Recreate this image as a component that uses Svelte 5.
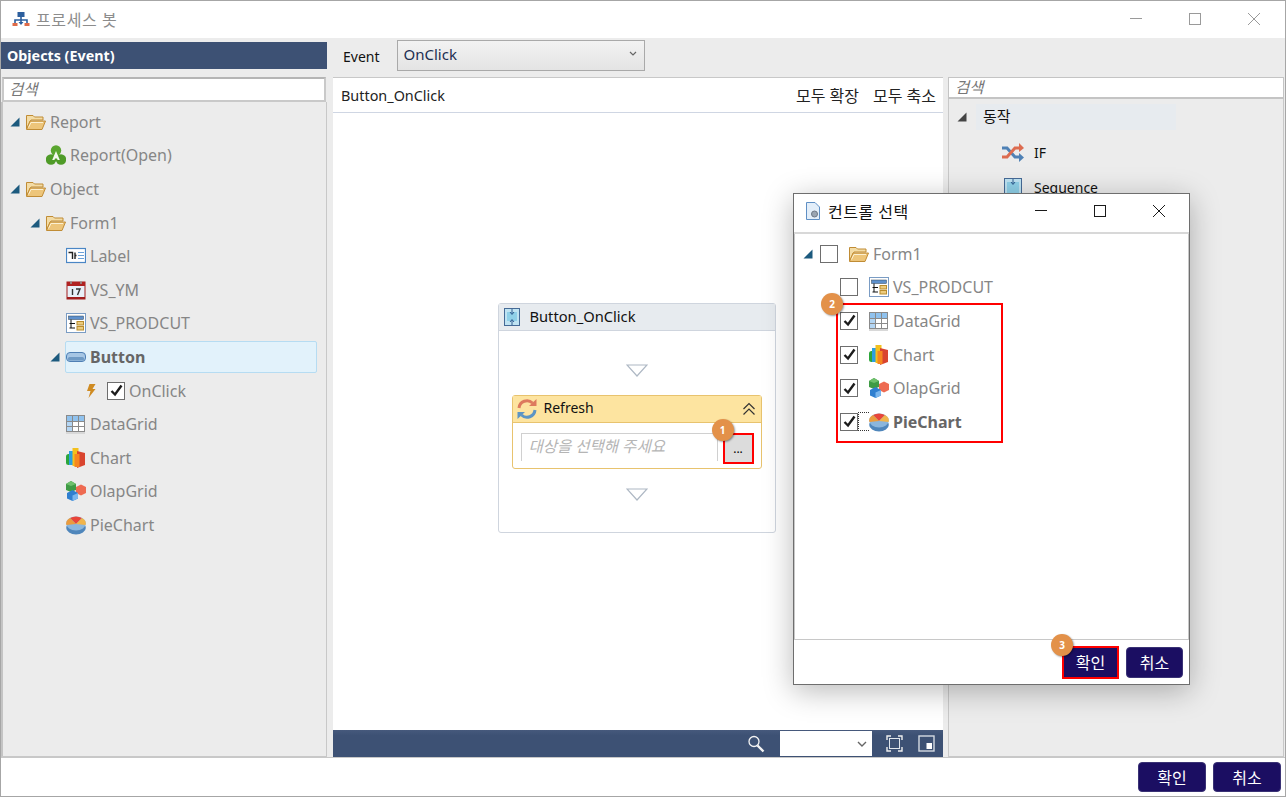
<script>
  const tree = [
    { label: 'Report', icon: 'folder', depth: 0, arrow: true },
    { label: 'Report(Open)', icon: 'recycle', depth: 1 },
    { label: 'Object', icon: 'folder', depth: 0, arrow: true },
    { label: 'Form1', icon: 'folder', depth: 1, arrow: true },
    { label: 'Label', icon: 'label', depth: 2 },
    { label: 'VS_YM', icon: 'calendar', depth: 2 },
    { label: 'VS_PRODCUT', icon: 'combo', depth: 2 },
    { label: 'Button', icon: 'button', depth: 2, arrow: true, selected: true },
    { label: 'OnClick', icon: 'bolt', depth: 3, check: true },
    { label: 'DataGrid', icon: 'grid', depth: 2 },
    { label: 'Chart', icon: 'chart', depth: 2 },
    { label: 'OlapGrid', icon: 'olap', depth: 2 },
    { label: 'PieChart', icon: 'pie', depth: 2 }
  ];

  const picks = [
    { label: 'VS_PRODCUT', icon: 'combo', checked: false },
    { label: 'DataGrid', icon: 'grid', checked: true },
    { label: 'Chart', icon: 'chart', checked: true },
    { label: 'OlapGrid', icon: 'olap', checked: true },
    { label: 'PieChart', icon: 'pie', checked: true, bold: true }
  ];
</script>

{#snippet arrow(dark = false)}
  <svg class="arrow" width="10" height="10" viewBox="0 0 10 10"><path d="M9.5 0.5V9.5H0.5Z" fill={dark ? '#444' : '#1c5a7e'} /></svg>
{/snippet}

{#snippet winButtons(color)}
  <div class="win-buttons">
    <svg width="14" height="14" viewBox="0 0 14 14"><path d="M1 6.5H13" stroke={color} fill="none" /></svg>
    <svg width="14" height="14" viewBox="0 0 14 14"><rect x="1.5" y="1.5" width="11" height="11" stroke={color} fill="none" /></svg>
    <svg width="14" height="14" viewBox="0 0 14 14"><path d="M1 1L13 13M13 1L1 13" stroke={color} fill="none" /></svg>
  </div>
{/snippet}

{#snippet icon(name)}
  <svg class="icon" width="20" height="20" viewBox="0 0 20 20">
    {#if name === 'folder'}
      <path d="M0.5 17V3.5H7L8.5 5H17V8H5L0.5 17Z" fill="#f3dca6" stroke="#c08c35" />
      <path d="M0.5 17.5L4 9H19.5L16 17.5Z" fill="#edc57a" stroke="#c08c35" />
      <path d="M2.5 15.5L5 10.5H17" stroke="#fbf0d2" fill="none" />
    {:else if name === 'recycle'}
      <circle cx="10" cy="5.5" r="5.2" fill="#5aa62f" />
      <circle cx="5" cy="14.5" r="5.2" fill="#4f9b28" />
      <circle cx="15" cy="14.5" r="5.2" fill="#4f9b28" />
      <path d="M10 6L13.8 15H11.6L11 13.5H9L8.4 15H6.2Z" fill="#f3f8ee" />
    {:else if name === 'label'}
      <rect x="0.5" y="2.5" width="19" height="14" fill="#fff" stroke="#4a86c5" stroke-width="1.2" />
      <path d="M2.5 6.5H6.5V13M9 6.5V13M9 9.5H10.5" stroke="#222" stroke-width="1.4" fill="none" />
      <path d="M12 6.5H18M12 9.5H18M12 12.5H18" stroke="#6aa0d8" fill="none" />
    {:else if name === 'calendar'}
      <rect x="1" y="2" width="18" height="17" fill="#e8f0f8" stroke="#a11d1d" />
      <rect x="1" y="2" width="18" height="4" fill="#b02222" />
      <rect x="1" y="17" width="18" height="2" fill="#a11d1d" />
      <path d="M5 1V4M15 1V4" stroke="#999" stroke-width="1.5" />
      <path d="M6.5 9V15M10 9H14L11.5 15" stroke="#333" stroke-width="1.4" fill="none" />
    {:else if name === 'combo'}
      <rect x="0.5" y="0.5" width="19" height="19" fill="#fff" stroke="#7a9cc4" />
      <rect x="2.5" y="3" width="15" height="3.5" fill="#5e90cc" stroke="#345" stroke-width="0.5" />
      <path d="M5 6.5V15M3.5 10.5H9M3.5 15H9" stroke="#111" fill="none" />
      <rect x="11" y="8.5" width="6.5" height="3.5" fill="#eccb7e" stroke="#b98c2d" />
      <rect x="11" y="13.5" width="6.5" height="3.5" fill="#eccb7e" stroke="#b98c2d" />
    {:else if name === 'button'}
      <rect x="0.5" y="5.5" width="19" height="9" rx="3.5" fill="#a6c6e4" stroke="#4f7fb4" />
      <rect x="2" y="10" width="16" height="3.5" rx="1.5" fill="#6f9ac4" />
    {:else if name === 'bolt'}
      <path d="M3.5 3H9.5L6.5 8H9.5L2.5 17L4.5 10H1Z" fill="#cf8b22" />
    {:else if name === 'grid'}
      <rect x="0.5" y="1.5" width="18" height="16" fill="#fff" stroke="#8a8a8a" />
      <rect x="1" y="2" width="17" height="5" fill="#90c2ee" />
      <rect x="1" y="7" width="5" height="10" fill="#b4d6f4" />
      <path d="M6.5 2V17.5M12.5 2V17.5M1 7.5H18M1 12.5H18" stroke="#8a8a8a" fill="none" />
      <rect x="0" y="18" width="19" height="2" fill="#d8d8d8" />
    {:else if name === 'chart'}
      <rect x="0" y="6" width="6" height="11" rx="2.5" fill="#2ca63a" />
      <rect x="3" y="3" width="5" height="14" fill="#2b9fe0" />
      <rect x="6.5" y="0" width="6" height="18" fill="#f3c01d" />
      <path d="M11 3L19 5V17L11 20Z" fill="#d9442f" />
      <rect x="8.5" y="6" width="5" height="13" fill="#f6861f" />
    {:else if name === 'olap'}
      <path d="M0 3L5 0L10 3V9L5 11L0 9Z" fill="#3f9b45" />
      <path d="M0 3L5 5L10 3L5 0Z" fill="#6fc06c" />
      <path d="M10 6L15 3.5L20 6V12L15 14.5L10 12Z" fill="#ee6b52" />
      <path d="M1 12L6.5 9L12 12V17.5L6.5 20L1 17.5Z" fill="#2f7fd0" />
      <path d="M6.5 14.5L12 12V17.5L6.5 20Z" fill="#7ab6ee" />
    {:else if name === 'pie'}
      <ellipse cx="10" cy="13" rx="9.8" ry="6.5" fill="#4f86bb" />
      <ellipse cx="10" cy="8.5" rx="9.8" ry="7" fill="#8bb6dc" />
      <path d="M10 9L4 3Q10 0 16 3Z" fill="#e8453a" />
      <path d="M10 9L16 3Q21 6 19.5 10Z" fill="#f1b44a" />
      <path d="M10 9L4 3Q-1 6 0.5 10Z" fill="#eb9b3c" />
    {/if}
  </svg>
{/snippet}

{#snippet checkbox(checked)}
  <span class="checkbox">
    {#if checked}
      <svg width="15" height="15" viewBox="0 0 15 15"><path d="M2.5 8L6 11.5L12.5 2.5" stroke="#1c1c1c" stroke-width="2.4" fill="none" /></svg>
    {/if}
  </span>
{/snippet}

{#snippet badge(n)}
  <span class="badge">{n}</span>
{/snippet}

<div class="window">
  <header class="titlebar">
    <svg width="18" height="16" viewBox="0 0 18 16">
      <rect x="5.5" y="1" width="7" height="5" fill="#2c5f9e" />
      <path d="M9 6V9M3 12V9H15V12" stroke="#2c5f9e" stroke-width="1.6" fill="none" />
      <path d="M9 9V12" stroke="#2c5f9e" stroke-width="1.6" />
      <path d="M6.5 11H11.5L9 14Z" fill="#2c5f9e" />
      <rect x="0.5" y="12" width="5" height="3" fill="#de6b48" />
      <rect x="12.5" y="12" width="5" height="3" fill="#de6b48" />
    </svg>
    <span class="app-title">프로세스 봇</span>
    {@render winButtons('#9a9a9a')}
  </header>

  <main class="main">
    <section class="left">
      <h2 class="panel-title">Objects (Event)</h2>
      <div class="search">검색</div>
      <div class="tree">
        {#each tree as row}
          <div class="row" style="padding-left: {7 + row.depth * 20}px">
            <span class="arrow-slot">{#if row.arrow}{@render arrow()}{/if}</span>
            <div class="row-body" class:selected={row.selected}>
              {@render icon(row.icon)}
              {#if row.check}<span class="row-check">{@render checkbox(true)}</span>{/if}
              <span class:bold={row.selected}>{row.label}</span>
            </div>
          </div>
        {/each}
      </div>
    </section>

    <section class="center">
      <div class="event-bar">
        <span class="event-label">Event</span>
        <div class="select">
          <span>OnClick</span>
          <svg width="8" height="6" viewBox="0 0 8 6"><path d="M1 1L4 4L7 1" stroke="#666" stroke-width="1.2" fill="none" /></svg>
        </div>
      </div>
      <div class="canvas-panel">
        <div class="canvas-head">
          <span>Button_OnClick</span>
          <div class="head-actions"><span>모두 확장</span><span>모두 축소</span></div>
        </div>
        <div class="canvas">
          <div class="sequence">
            <div class="sequence-head">
              <svg width="16" height="18" viewBox="0 0 16 18">
                <rect x="0.5" y="0.5" width="15" height="17" fill="#bfe3f2" stroke="#456a96" />
                <rect x="3" y="4" width="10" height="9" fill="#8fd0e8" />
                <path d="M8 1V6M6 4L8 6.5L10 4M8 17V12M6 14L8 11.5L10 14" stroke="#345f92" fill="none" />
              </svg>
              <span>Button_OnClick</span>
            </div>
            <div class="sequence-body">
              <svg class="drop" width="22" height="13" viewBox="0 0 22 13"><path d="M1 1H21L11 12Z" fill="#fff" stroke="#aeb8c4" stroke-width="1.2" /></svg>
              <div class="activity">
                <div class="activity-head">
                  <svg width="20" height="20" viewBox="0 0 20 20">
                    <path d="M2 9A8 8 0 0 1 15.5 4" stroke="#dd7a5e" stroke-width="3" fill="none" />
                    <path d="M12 7H19.5V0Z" fill="#dd7a5e" />
                    <path d="M18 11A8 8 0 0 1 4.5 16" stroke="#5c94c4" stroke-width="3" fill="none" />
                    <path d="M8 13H0.5V20Z" fill="#5c94c4" />
                  </svg>
                  <span>Refresh</span>
                  <svg class="collapse" width="14" height="14" viewBox="0 0 14 14"><path d="M1.5 7L7 1.5L12.5 7M1.5 12.5L7 7L12.5 12.5" stroke="#333" stroke-width="1.2" fill="none" /></svg>
                </div>
                <div class="activity-body">
                  <div class="target-input">대상을 선택해 주세요</div>
                  <button class="dots">...</button>
                  <div class="badge-one">{@render badge(1)}</div>
                </div>
              </div>
              <svg class="drop" width="22" height="13" viewBox="0 0 22 13"><path d="M1 1H21L11 12Z" fill="#fff" stroke="#aeb8c4" stroke-width="1.2" /></svg>
            </div>
          </div>
        </div>
        <div class="zoom-bar">
          <svg width="18" height="18" viewBox="0 0 18 18"><circle cx="7" cy="6.5" r="5" fill="none" stroke="#f4f4f4" stroke-width="1.3" /><path d="M10.5 10.5L16.5 16.5" stroke="#f4f4f4" stroke-width="2.4" /></svg>
          <div class="zoom-select">
            <svg width="10" height="6" viewBox="0 0 10 6"><path d="M1 1L5 5L9 1" stroke="#666" stroke-width="1.4" fill="none" /></svg>
          </div>
          <svg width="17" height="17" viewBox="0 0 17 17"><path d="M1 5V1H5M12 1H16V5M16 12V16H12M5 16H1V12" stroke="#eee" stroke-width="1.4" fill="none" /><rect x="3.5" y="3.5" width="10" height="10" stroke="#dfe5ec" fill="none" /></svg>
          <svg width="17" height="17" viewBox="0 0 17 17"><rect x="1" y="1" width="15" height="15" stroke="#d5dbe3" stroke-width="1.4" fill="none" /><rect x="8.5" y="8" width="5.5" height="6" fill="#fff" /></svg>
        </div>
      </div>
    </section>

    <section class="right">
      <div class="search slim">검색</div>
      <div class="toolbox">
        <div class="group-row">
          {@render arrow(true)}
          <span class="group-name">동작</span>
        </div>
        <div class="tool">
          <span class="tool-icon">
            <svg width="24" height="20" viewBox="0 0 24 20">
              <path d="M1 5H6L14 14H19" stroke="#4f81b5" stroke-width="3" fill="none" />
              <path d="M18 10L23 14.5L18 19Z" fill="#4f81b5" />
              <path d="M1 14H6L14 5H19" stroke="#dd6c50" stroke-width="3" fill="none" />
              <path d="M18 0L23 5L18 9Z" fill="#dd6c50" />
            </svg>
          </span>
          <span>IF</span>
        </div>
        <div class="tool">
          <span class="tool-icon">
            <svg width="18" height="20" viewBox="0 0 18 20">
              <rect x="0.5" y="0.5" width="17" height="19" fill="#bfe3f2" stroke="#456a96" />
              <rect x="3" y="4" width="12" height="11" fill="#8fd0e8" />
              <path d="M9 1V6M7 4L9 6.5L11 4" stroke="#345f92" fill="none" />
            </svg>
          </span>
          <span>Sequence</span>
        </div>
      </div>
    </section>
  </main>

  <footer class="footer">
    <button class="primary">확인</button>
    <button class="primary">취소</button>
  </footer>

  <div class="dialog">
    <header class="dialog-title">
      <svg width="16" height="18" viewBox="0 0 16 18">
        <path d="M1.5 0.5H10L14.5 5V17.5H1.5Z" fill="#e3eef9" stroke="#5f8fc4" />
        <circle cx="9.5" cy="12" r="3" fill="#9aa5b2" stroke="#6d7785" />
      </svg>
      <span>컨트롤 선택</span>
      {@render winButtons('#1a1a1a')}
    </header>
    <div class="dialog-tree">
      <div class="pick root">
        <span class="arrow-slot">{@render arrow()}</span>
        {@render checkbox(false)}
        <span class="root-icon">{@render icon('folder')}</span>
        <span>Form1</span>
      </div>
      {#each picks as pick}
        <div class="pick child">
          {@render checkbox(pick.checked)}
          <span class="focus-slot" class:focused={pick.bold}></span>
          {@render icon(pick.icon)}
          <span class:bold={pick.bold}>{pick.label}</span>
        </div>
      {/each}
      <div class="red-box"></div>
      <div class="badge-two">{@render badge(2)}</div>
    </div>
    <footer class="dialog-footer">
      <div class="confirm-wrap">
        <button class="primary small outlined">확인</button>
        <div class="badge-three">{@render badge(3)}</div>
      </div>
      <button class="primary small">취소</button>
    </footer>
  </div>
</div>

<style>
  :global(body) {
    margin: 0;
  }

  .window {
    position: relative;
    box-sizing: border-box;
    width: 1286px;
    height: 797px;
    display: flex;
    flex-direction: column;
    border: 1px solid #a6a6a6;
    background: #fff;
    overflow: hidden;
    font-family: "Noto Sans", "Noto Sans CJK KR", sans-serif;
    font-size: 14px;
    color: #111;
  }

  .titlebar {
    box-sizing: border-box;
    height: 37px;
    flex: none;
    display: flex;
    align-items: center;
    padding: 0 0 2px 11px;
    background: #fff;
  }

  .app-title {
    margin-left: 6px;
    color: #8c8c8c;
    font-size: 16px;
    letter-spacing: 0.6px;
  }

  .win-buttons {
    margin-left: auto;
    display: flex;
    gap: 45px;
    padding-right: 24px;
  }

  .main {
    flex: 1;
    min-height: 0;
    display: grid;
    grid-template-columns: 326px 611px 336px;
    column-gap: 5px;
    padding-top: 4px;
    background: #ececec;
    border-bottom: 1px solid #c8c8c8;
  }

  .left,
  .center,
  .right {
    display: flex;
    flex-direction: column;
    min-height: 0;
  }

  .center {
    margin-left: 1px;
  }

  .panel-title {
    margin: 0 0 8px;
    height: 27px;
    line-height: 27px;
    padding-left: 6px;
    background: #3d5174;
    color: #fff;
    font-size: 14.3px;
    font-weight: 700;
  }

  .search {
    box-sizing: border-box;
    height: 25px;
    line-height: 20px;
    margin: 0 1px;
    padding-left: 5px;
    background: #fff;
    border: 2px solid #c9c9c9;
    border-top-color: #b5b5b5;
    color: #777;
    font-style: italic;
    font-size: 15.5px;
  }

  .search.slim {
    margin: 35px 0 0;
    height: 22px;
    line-height: 18px;
    padding-left: 6px;
    border-width: 1px 1px 2px 1px;
    border-color: #c4c4c4;
  }

  .tree {
    flex: 1;
    padding-top: 3px;
    border-left: 2px solid #c4c4c4;
    border-right: 1px solid #c8c8c8;
    border-bottom: 1px solid #c8c8c8;
  }

  .row {
    height: 33.6px;
    display: flex;
    align-items: center;
    color: #868686;
    font-size: 16px;
  }

  .arrow-slot {
    width: 10px;
    margin-right: 5px;
    flex: none;
    display: flex;
  }

  .row-body {
    flex: 1;
    min-width: 0;
    height: 32px;
    margin-right: 9px;
    display: flex;
    align-items: center;
    gap: 4px;
    border: 1px solid transparent;
    border-radius: 2px;
    box-sizing: border-box;
  }

  .row-body.selected {
    background: #e2f2fb;
    border-color: #b6dcf2;
  }

  .row-check {
    margin-left: -3px;
    display: flex;
  }

  .bold {
    font-weight: 700;
    color: #666;
  }

  .icon {
    flex: none;
  }

  .checkbox {
    box-sizing: border-box;
    width: 18px;
    height: 18px;
    flex: none;
    display: flex;
    align-items: center;
    justify-content: center;
    border: 1px solid #6e6e6e;
    background: #fff;
  }

  .event-bar {
    height: 33px;
    margin-top: -2px;
    flex: none;
    display: flex;
    align-items: flex-start;
    gap: 17px;
    padding-left: 10px;
  }

  .event-label {
    margin-top: 7px;
    font-size: 14px;
  }

  .select {
    box-sizing: border-box;
    width: 248px;
    height: 31px;
    display: flex;
    align-items: center;
    justify-content: space-between;
    padding: 0 7px 3px 6px;
    border: 1px solid #a9a9a9;
    background: linear-gradient(#f2f2f2, #e4e4e4);
    color: #1d2f52;
    font-size: 15px;
  }

  .canvas-panel {
    flex: 1;
    min-height: 0;
    display: flex;
    flex-direction: column;
    border-top: 1px solid #c8c8c8;
    background: #fff;
    margin-top: 4px;
  }

  .canvas-head {
    box-sizing: border-box;
    height: 35px;
    flex: none;
    display: flex;
    align-items: center;
    justify-content: space-between;
    padding: 0 7px 0 8px;
    border-bottom: 1px solid #cfd6e3;
    font-size: 14.4px;
    color: #222;
  }

  .head-actions {
    display: flex;
    gap: 14px;
    font-size: 16px;
  }

  .canvas {
    flex: 1;
    min-height: 0;
    display: flex;
    align-items: center;
    justify-content: center;
    padding: 0 3px 7px 0;
  }

  .sequence {
    box-sizing: border-box;
    width: 278px;
    height: 230px;
    display: flex;
    flex-direction: column;
    border: 1px solid #cfd5de;
    border-radius: 3px;
  }

  .sequence-head {
    height: 26px;
    flex: none;
    display: flex;
    align-items: center;
    gap: 10px;
    padding-left: 5px;
    background: #e7ebef;
    border-bottom: 1px solid #cfd5de;
    font-size: 14.7px;
  }

  .sequence-head span,
  .activity-head span {
    margin-top: -3px;
  }

  .sequence-body {
    flex: 1;
    display: flex;
    flex-direction: column;
    align-items: center;
    padding-top: 33px;
  }

  .drop {
    flex: none;
  }

  .activity {
    box-sizing: border-box;
    width: 250px;
    height: 74px;
    margin: 18px 0 19px;
    border: 1px solid #e8c36e;
    border-radius: 3px;
  }

  .activity-head {
    height: 26px;
    display: flex;
    align-items: center;
    gap: 7px;
    padding: 0 5px 0 4px;
    background: #fde4a0;
    border-bottom: 1px solid #e8c36e;
    font-size: 14px;
  }

  .collapse {
    margin-left: auto;
  }

  .activity-body {
    position: relative;
    display: flex;
    padding: 10px 7px 0 8px;
    justify-content: space-between;
  }

  .target-input {
    box-sizing: border-box;
    width: 197px;
    height: 28px;
    line-height: 24px;
    padding-left: 7px;
    border: 1px solid #d0d0d0;
    border-bottom: 0;
    color: #b5b5b5;
    font-style: italic;
    font-size: 15.5px;
    white-space: nowrap;
  }

  .dots {
    box-sizing: border-box;
    width: 31px;
    height: 31px;
    padding: 0;
    border: 2px solid #f00;
    background: #dcdcdc;
    font: inherit;
    font-size: 12px;
  }

  .badge {
    width: 22px;
    height: 22px;
    display: flex;
    align-items: center;
    justify-content: center;
    border-radius: 50%;
    background: #e39149;
    box-shadow: 1px 1px 2px rgba(0, 0, 0, 0.4);
    color: #fff;
    font-size: 10px;
    font-weight: 700;
  }

  .badge-one {
    position: absolute;
    right: 27px;
    top: -4px;
  }

  .zoom-bar {
    height: 27px;
    flex: none;
    display: flex;
    align-items: center;
    padding-right: 8px;
    background: linear-gradient(#46597c, #3d5174 20%);
  }

  .zoom-bar > svg:first-child {
    margin-left: auto;
    margin-right: 15px;
  }

  .zoom-select {
    width: 92px;
    height: 25px;
    display: flex;
    align-items: center;
    justify-content: flex-end;
    padding-right: 5px;
    box-sizing: border-box;
    background: #fff;
    margin-right: 14px;
  }

  .zoom-bar > svg:last-child {
    margin-left: 15px;
  }

  .toolbox {
    flex: 1;
    min-height: 0;
    border: 1px solid #c8c8c8;
    border-top: 0;
    padding-top: 5px;
  }

  .group-row {
    height: 26px;
    display: flex;
    align-items: center;
    padding-left: 8px;
    margin-bottom: 5px;
  }

  .group-name {
    width: 200px;
    height: 26px;
    line-height: 25px;
    margin-left: 9px;
    padding-left: 7px;
    box-sizing: border-box;
    background: #e7ebef;
    font-size: 15px;
  }

  .tool {
    height: 35px;
    display: flex;
    align-items: center;
    gap: 9px;
    padding-left: 52px;
    font-size: 14px;
  }

  .tool-icon {
    width: 24px;
    display: flex;
    justify-content: center;
  }

  .footer {
    height: 38px;
    flex: none;
    display: flex;
    align-items: center;
    justify-content: flex-end;
    gap: 7px;
    padding-right: 4px;
    background: #fff;
  }

  .primary {
    box-sizing: border-box;
    width: 68px;
    height: 30px;
    padding: 0;
    border: 1px solid #3a3275;
    border-radius: 4px;
    background: #1b0e62;
    color: #fff;
    font: inherit;
    font-size: 16px;
  }

  .primary.small {
    width: 57px;
    height: 31px;
  }

  .primary.outlined {
    height: 33px;
    border: 2px solid #f00;
    border-radius: 0;
  }

  .dialog {
    position: absolute;
    left: 792px;
    top: 192px;
    box-sizing: border-box;
    width: 397px;
    height: 492px;
    display: flex;
    flex-direction: column;
    background: #fff;
    border: 1px solid #6e6e6e;
    box-shadow: 0 6px 28px rgba(0, 0, 0, 0.28);
  }

  .dialog-title {
    box-sizing: border-box;
    height: 40px;
    flex: none;
    display: flex;
    align-items: center;
    gap: 7px;
    padding: 0 0 4px 11px;
    border-bottom: 2px solid #d8d8d8;
    font-size: 16px;
    letter-spacing: 0.5px;
  }

  .dialog-title .win-buttons {
    padding-right: 23px;
  }

  .dialog-tree {
    position: relative;
    flex: 1;
    min-height: 0;
    padding-top: 3px;
    border-left: 1px solid #c8c8c8;
    border-right: 1px solid #c8c8c8;
    border-bottom: 1px solid #c8c8c8;
    color: #868686;
    font-size: 16px;
  }

  .pick {
    height: 33.6px;
    display: flex;
    align-items: center;
  }

  .pick.root {
    padding-left: 8px;
  }

  .pick.root .arrow-slot {
    margin-right: 7px;
  }

  .root-icon {
    margin: 0 4px 0 11px;
    display: flex;
  }

  .pick.child {
    padding-left: 45px;
  }

  .focus-slot {
    box-sizing: border-box;
    width: 11px;
    height: 19px;
    flex: none;
  }

  .focus-slot.focused {
    border: 1px dotted #333;
    border-right: 0;
  }

  .pick.child .icon {
    margin-right: 4px;
  }

  .red-box {
    position: absolute;
    left: 41px;
    top: 69px;
    box-sizing: border-box;
    width: 167px;
    height: 140px;
    border: 2px solid #f00;
  }

  .badge-two {
    position: absolute;
    left: 26px;
    top: 59px;
  }

  .dialog-footer {
    height: 44px;
    flex: none;
    display: flex;
    align-items: center;
    justify-content: flex-end;
    gap: 7px;
    padding: 0 6px 0 0;
  }

  .confirm-wrap {
    position: relative;
    display: flex;
  }

  .badge-three {
    position: absolute;
    left: -11px;
    top: -12px;
  }
</style>
